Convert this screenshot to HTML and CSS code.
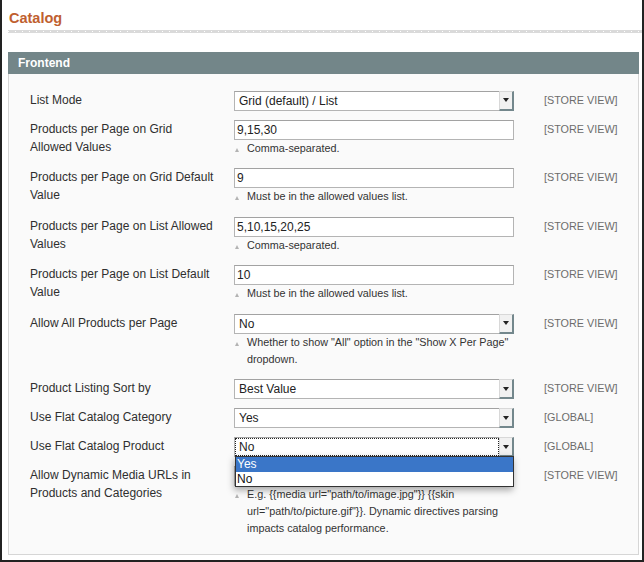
FILE: index.html
```html
<!DOCTYPE html>
<html lang="en">
<head>
<meta charset="utf-8">
<title>Catalog</title>
<link rel="stylesheet" href="styles.css">
</head>
<body>
<div class="frame">
  <h3 class="title">Catalog</h3>
  <div class="rule"></div>
  <div class="section">
    <div class="section-head">Frontend</div>
    <div class="section-body">
      <div class="row">
        <div class="label">List Mode</div>
        <div class="value"><div class="select"><span class="select-text">Grid (default) / List</span><span class="arrow"></span></div></div>
        <div class="scope">[STORE VIEW]</div>
      </div>
      <div class="row">
        <div class="label">Products per Page on Grid Allowed Values</div>
        <div class="value"><div class="input">9,15,30</div><p class="note">Comma-separated.</p></div>
        <div class="scope">[STORE VIEW]</div>
      </div>
      <div class="row">
        <div class="label">Products per Page on Grid Default Value</div>
        <div class="value"><div class="input">9</div><p class="note">Must be in the allowed values list.</p></div>
        <div class="scope">[STORE VIEW]</div>
      </div>
      <div class="row">
        <div class="label">Products per Page on List Allowed Values</div>
        <div class="value"><div class="input">5,10,15,20,25</div><p class="note">Comma-separated.</p></div>
        <div class="scope">[STORE VIEW]</div>
      </div>
      <div class="row">
        <div class="label">Products per Page on List Default Value</div>
        <div class="value"><div class="input">10</div><p class="note">Must be in the allowed values list.</p></div>
        <div class="scope">[STORE VIEW]</div>
      </div>
      <div class="row">
        <div class="label">Allow All Products per Page</div>
        <div class="value"><div class="select"><span class="select-text">No</span><span class="arrow"></span></div><p class="note">Whether to show "All" option in the "Show X Per Page" dropdown.</p></div>
        <div class="scope">[STORE VIEW]</div>
      </div>
      <div class="row">
        <div class="label">Product Listing Sort by</div>
        <div class="value"><div class="select"><span class="select-text">Best Value</span><span class="arrow"></span></div></div>
        <div class="scope">[STORE VIEW]</div>
      </div>
      <div class="row">
        <div class="label">Use Flat Catalog Category</div>
        <div class="value"><div class="select"><span class="select-text">Yes</span><span class="arrow"></span></div></div>
        <div class="scope">[GLOBAL]</div>
      </div>
      <div class="row">
        <div class="label">Use Flat Catalog Product</div>
        <div class="value value-open">
          <div class="select is-focus"><span class="select-text">No</span><span class="arrow"></span></div>
          <ul class="dropdown">
            <li class="option is-selected">Yes</li>
            <li class="option">No</li>
          </ul>
        </div>
        <div class="scope">[GLOBAL]</div>
      </div>
      <div class="row">
        <div class="label">Allow Dynamic Media URLs in Products and Categories</div>
        <div class="value"><div class="select"><span class="select-text">Yes</span><span class="arrow"></span></div><p class="note">E.g. {{media url="path/to/image.jpg"}} {{skin url="path/to/picture.gif"}}. Dynamic directives parsing impacts catalog performance.</p></div>
        <div class="scope">[STORE VIEW]</div>
      </div>
    </div>
  </div>
</div>
</body>
</html>
```

FILE: styles.css
```css
* {
  box-sizing: border-box;
}

html, body {
  margin: 0;
  padding: 0;
  background: #fff;
}

body {
  font-family: "Liberation Sans", Arial, sans-serif;
  color: #2f2f2f;
}

.frame {
  width: 644px;
  height: 562px;
  border: 2px solid #222;
  border-top: 0;
  padding: 0 0 0 6px;
  overflow: hidden;
}

.title {
  margin: 0 0 3px 1px;
  padding-top: 9px;
  font-size: 14.5px;
  line-height: 18px;
  font-weight: bold;
  color: #c0602f;
}

.rule {
  height: 3px;
  background:
    repeating-linear-gradient(to right, #fff 0 1px, transparent 1px 7px) 0 1px / 100% 1px no-repeat,
    #dadada;
}

.section {
  margin: 19px 3px 0 0;
}

.section-head {
  height: 22px;
  padding-left: 10px;
  background: #738689;
  color: #fff;
  font-size: 12px;
  font-weight: bold;
  line-height: 22px;
}

.section-body {
  background: #fafafa;
  border: 1px solid #d6d6d6;
  border-top: 0;
  padding: 16.8px 0 5px 21px;
}

.row {
  display: grid;
  grid-template-columns: 204px 280px auto;
  padding-bottom: 9px;
}

.label {
  padding-right: 18px;
  font-size: 12px;
  line-height: 18px;
  color: #2f2f2f;
}

.value {
  min-width: 0;
}

.value-open {
  position: relative;
}

.scope {
  padding-left: 30px;
  font-size: 10.8px;
  line-height: 18px;
  color: #6c6c6c;
}

.input {
  height: 20px;
  border: 1px solid #b4b4b4;
  border-top-color: #a2a2a2;
  background: #fff;
  padding-left: 2px;
  font-size: 12px;
  line-height: 18px;
  color: #222;
}

.select {
  display: flex;
  height: 20px;
  border: 1px solid #b4b4b4;
  border-top-color: #a2a2a2;
  background: #fff;
}

.select-text {
  flex: 1;
  padding-left: 4px;
  font-size: 12px;
  line-height: 18px;
  color: #222;
}

.select.is-focus .select-text {
  outline: 1px dotted #222;
  outline-offset: -1px;
}

.arrow {
  display: flex;
  align-items: center;
  justify-content: center;
  width: 15px;
  margin: -1px -1px -1px 0;
  background: #f1f1f1;
  border-left: 1px solid #d8d8d8;
  border-top: 1px solid #d8d8d8;
  border-right: 2px solid #73878c;
  border-bottom: 2px solid #73878c;
}

.arrow::before {
  content: "";
  width: 0;
  height: 0;
  border-left: 3px solid transparent;
  border-right: 3px solid transparent;
  border-top: 4px solid #222;
}

.note {
  margin: 0 0 2.5px;
  padding-left: 13px;
  font-size: 10.8px;
  line-height: 17px;
  color: #333;
}

.note::before {
  content: "";
  float: left;
  width: 0;
  height: 0;
  margin: 8px 0 0 -12px;
  border-left: 2.5px solid transparent;
  border-right: 2.5px solid transparent;
  border-bottom: 4px solid #b3b3b3;
}

.dropdown {
  position: absolute;
  top: 19px;
  left: 1px;
  width: 279px;
  margin: 0;
  padding: 0;
  list-style: none;
  background: #fff;
  border: 1px solid #333;
  box-shadow: -1px 3px 7px rgba(0, 0, 0, 0.35);
  z-index: 2;
}

.option {
  height: 14.5px;
  padding-left: 1px;
  font-size: 12px;
  line-height: 14.5px;
  color: #111;
}

.option.is-selected {
  background: #3a76c8;
  color: #fff;
}
```
